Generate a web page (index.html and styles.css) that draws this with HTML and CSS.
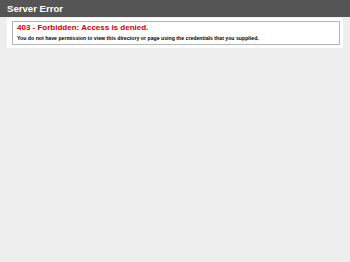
FILE: index.html
```html
<!DOCTYPE html>
<html>
<head>
<meta charset="utf-8">
<title>403 - Forbidden: Access is denied.</title>
<link rel="stylesheet" href="styles.css">
</head>
<body>
<div class="header"><h1 class="title">Server Error</h1></div>
<div class="content">
  <div class="content-container">
    <fieldset class="box">
      <h2 class="error">403 - Forbidden: Access is denied.</h2>
      <h3 class="message">You do not have permission to view this directory or page using the credentials that you supplied.</h3>
    </fieldset>
  </div>
</div>
</body>
</html>
```

FILE: styles.css
```css
html, body {
  margin: 0;
  padding: 0;
  height: 100%;
}
body {
  background: #eeeeee;
  font-family: "Liberation Sans", Arial, sans-serif;
}
.header {
  height: 17px;
  background: #555555;
  padding: 0 7px;
  display: flex;
  align-items: center;
}
.title {
  margin: 0;
  color: #ffffff;
  font-size: 9.6px;
  font-weight: bold;
  line-height: 10px;
}
.content {
  padding: 1px 7px 0 7px;
}
.content-container {
  background: #ffffff;
  padding: 3px 3px 3px 5px;
}
.box {
  margin: 0;
  border: 1px solid #b4b4b4;
  padding: 1px 4px 3px 4px;
}
.error {
  margin: 0;
  color: #cc0000;
  font-size: 8px;
  line-height: 9px;
  font-weight: bold;
}
.message {
  margin: 3px 0 0 0;
  color: #000000;
  font-size: 5.2px;
  line-height: 6px;
  font-weight: bold;
}
```
